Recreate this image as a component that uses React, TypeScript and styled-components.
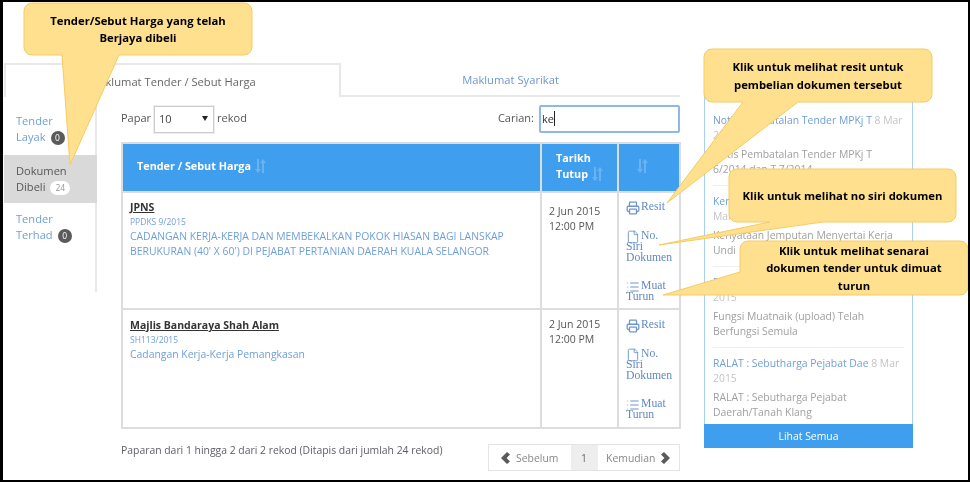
import React from "react";
import styled, { createGlobalStyle } from "styled-components";
import { Printer, File, List } from "lucide-react";

const Global = createGlobalStyle`
  html, body { margin: 0; padding: 0; background: #fff; }
  body { font-family: "Open Sans", "Liberation Sans", sans-serif; font-size: 10.5px; color: #555; }
`;

const Frame = styled.div`
  position: relative;
  box-sizing: border-box;
  width: 970px;
  height: 482px;
  padding: 63px 0 0 4px;
  display: flex;
  align-items: flex-start;
  overflow: hidden;
  background: #fff;
  filter: blur(0.35px);
  &::after {
    content: "";
    position: absolute;
    inset: 0;
    border-style: solid;
    border-color: #000;
    border-width: 2px 2px 2px 3px;
    pointer-events: none;
  }
`;

const Main = styled.div`
  width: 676px;
  flex: none;
`;

const Tabs = styled.div`
  display: flex;
  height: 34px;
`;

const Tab = styled.div<{ $active?: boolean }>`
  box-sizing: border-box;
  width: ${(p) => (p.$active ? 337 : 339)}px;
  display: flex;
  align-items: center;
  justify-content: center;
  font-size: 11.2px;
  color: ${(p) => (p.$active ? "#666" : "#6f97cf")};
  border-style: solid;
  border-color: #e8e8e8;
  border-width: ${(p) => (p.$active ? "2px 2px 0 2px" : "0 0 2px 0")};
`;

const Body = styled.div`
  display: flex;
  align-items: flex-start;
`;

const Nav = styled.nav`
  box-sizing: border-box;
  width: 93px;
  height: 195px;
  flex: none;
  border-right: 2px solid #e8e8e8;
`;

const NavItem = styled.div<{ $active?: boolean; $pad: string }>`
  padding: ${(p) => p.$pad};
  line-height: 16px;
  font-size: 11.1px;
  color: ${(p) => (p.$active ? "#555" : "#6f9fd8")};
  background: ${(p) => (p.$active ? "#d9d9d9" : "transparent")};
  margin-right: -2px;
`;

const Badge = styled.span<{ $light?: boolean }>`
  display: inline-block;
  min-width: 14px;
  box-sizing: border-box;
  height: 14px;
  line-height: 14px;
  padding: 0 ${(p) => (p.$light ? 5 : 3)}px;
  margin-left: 5px;
  border-radius: 7px;
  font-size: 8.5px;
  text-align: center;
  vertical-align: 0;
  color: ${(p) => (p.$light ? "#999" : "#fff")};
  background: ${(p) => (p.$light ? "#fff" : "#5a5a5a")};
`;

const Content = styled.div`
  margin-left: 24px;
  width: 559px;
  flex: none;
`;

const Controls = styled.div`
  display: flex;
  align-items: center;
  height: 28px;
  margin-top: 8px;
  font-size: 11px;
`;

const Label = styled.span`
  margin-top: -3px;
`;

const SelectBox = styled.div`
  box-sizing: border-box;
  width: 60px;
  height: 27px;
  margin: 0 3px 0 3px;
  padding: 0 0 2px 4px;
  display: flex;
  align-items: center;
  justify-content: space-between;
  border: 1px solid #ccc;
  box-shadow: 0 0 0 1px #eee;
  color: #444;
  font-size: 11px;
  &::after {
    content: "";
    margin-right: 5px;
    border-left: 3.5px solid transparent;
    border-right: 3.5px solid transparent;
    border-top: 5px solid #222;
  }
`;

const Spacer = styled.div`
  flex: 1;
`;

const SearchBox = styled.div`
  box-sizing: border-box;
  width: 141px;
  height: 28px;
  margin-left: 5px;
  padding: 0 0 1px 1px;
  display: flex;
  align-items: center;
  border: 2px solid #8fb8ea;
  border-radius: 2px;
  color: #333;
  font-size: 11px;
  &::after {
    content: "";
    width: 1px;
    height: 15px;
    background: #222;
  }
`;

const Table = styled.table`
  width: 558px;
  margin-top: 9px;
  table-layout: fixed;
  border-collapse: collapse;
  border-bottom: 2px solid #6b97b8;
`;

const HeadRow = styled.tr`
  height: 49px;
  background: #409eee;
`;

const Th = styled.th`
  padding: 0 6px 3px 14px;
  border: 2px solid #ddd;
  color: #fff;
  font-size: 10.8px;
  font-weight: 700;
  line-height: 16px;
  text-align: left;
`;

const Row = styled.tr<{ $h: number }>`
  height: ${(p) => p.$h}px;
`;

const Td = styled.td<{ $pad: string }>`
  padding: ${(p) => p.$pad};
  border: 2px solid #ddd;
  vertical-align: top;
  overflow: hidden;
`;

const Agency = styled.div`
  font-size: 10.5px;
  font-weight: 700;
  line-height: 16px;
  color: #333;
  text-decoration: underline;
`;

const Ref = styled.div`
  font-size: 8.5px;
  line-height: 14px;
  color: #6f9fd8;
`;

const Desc = styled.div`
  font-size: 10.4px;
  line-height: 15px;
  color: #6f9fd8;
  white-space: nowrap;
`;

const DateText = styled.div`
  font-size: 10.5px;
  line-height: 14.5px;
  color: #555;
`;

const Actions = styled.div`
  display: flex;
  flex-direction: column;
  gap: 17.5px;
`;

const ActionLink = styled.a`
  font-family: "Liberation Serif", serif;
  font-size: 11.7px;
  line-height: 11px;
  color: #6189c4;
  svg {
    vertical-align: -2px;
    margin: -3px 1px -3px 0;
    color: #6f96cc;
  }
`;

const Footer = styled.div`
  display: flex;
  justify-content: space-between;
  align-items: flex-start;
  margin-top: 15px;
`;

const Info = styled.div`
  font-size: 10.4px;
  line-height: 16px;
  margin-top: -2px;
  color: #5d5d66;
`;

const Pager = styled.div`
  box-sizing: border-box;
  width: 192px;
  height: 27px;
  display: flex;
  border: 1px solid #e4e4e4;
  font-size: 10.4px;
  color: #888;
`;

const PageBtn = styled.div`
  flex: 1;
  display: flex;
  align-items: center;
  justify-content: center;
  gap: 6px;
  svg { color: #5a5a5a; flex: none; }
`;

const PageNum = styled.div`
  width: 27px;
  display: flex;
  align-items: center;
  justify-content: center;
  background: #eee;
  color: #666;
`;

const Panel = styled.aside`
  box-sizing: border-box;
  width: 209px;
  height: 358px;
  margin: 27px 0 0 24px;
  flex: none;
  display: flex;
  flex-direction: column;
  border: 1px solid #a8d0f5;
  border-bottom: 0;
`;

const PanelList = styled.div`
  flex: 1;
  padding: 22px 8px 0;
  overflow: hidden;
`;

const NewsItem = styled.div`
  padding-bottom: 8px;
  margin-bottom: 8px;
  border-bottom: 1px solid #eee;
  &:last-child { border-bottom: 0; margin-bottom: 0; padding-bottom: 0; }
`;

const NewsTitle = styled.div`
  font-size: 10.4px;
  line-height: 15px;
  color: #6f9fd8;
  span { color: #c4c4c4; }
`;

const NewsBody = styled.div`
  margin-top: 4px;
  font-size: 10.4px;
  line-height: 15px;
  color: #a0a0a0;
`;

const SeeAll = styled.div`
  height: 24px;
  margin: 0 -1px;
  display: flex;
  align-items: center;
  justify-content: center;
  background: #409eee;
  color: #fff;
  font-size: 10.4px;
`;

const Bubble = styled.div<{ $l: number; $t: number; $w: number; $h: number }>`
  position: absolute;
  left: ${(p) => p.$l}px;
  top: ${(p) => p.$t}px;
  width: ${(p) => p.$w}px;
  height: ${(p) => p.$h}px;
  display: flex;
  align-items: center;
  justify-content: center;
  text-align: center;
  font-size: 11.3px;
  font-weight: 700;
  line-height: 17.5px;
  color: #000;
`;

const BubbleShape = styled.svg`
  position: absolute;
  left: 0;
  top: 0;
  overflow: visible;
  fill: #ffe08f;
  stroke: #f6cb62;
  stroke-width: 1;
`;

const BubbleText = styled.div`
  position: relative;
  padding: 0 6px;
`;

const SortSvg = styled.svg`
  display: inline-block;
  vertical-align: -3px;
  margin-left: 4px;
  fill: #fff;
  opacity: 0.22;
`;

const Sort = () => (
  <SortSvg width="11" height="14" viewBox="0 0 11 14">
    <path d="M2 0h2v10h2l-3 4-3-4h2z" />
    <path d="M7 14h2V4h2L8 0 5 4h2z" />
  </SortSvg>
);

const Chevron = ({ right }: { right?: boolean }) => (
  <svg width="9" height="12" viewBox="0 0 9 12" fill="currentColor">
    <path d={right ? "M3 0l6 6-6 6-3-2.6L3.4 6 0 2.6z" : "M6 0L0 6l6 6 3-2.6L5.6 6 9 2.6z"} />
  </svg>
);

const RowActions = () => (
  <Actions>
    <ActionLink>
      <Printer size={14} strokeWidth={2.2} />Resit
    </ActionLink>
    <ActionLink>
      <File size={14} strokeWidth={1.6} />No.
      <br />
      Siri
      <br />
      Dokumen
    </ActionLink>
    <ActionLink>
      <List size={14} strokeWidth={1.8} />Muat
      <br />
      Turun
    </ActionLink>
  </Actions>
);

const bubbles = [
  {
    l: 24, t: 3, w: 228, h: 52,
    d: "M8 0H220a8 8 0 0 1 8 8V44a8 8 0 0 1-8 8H95L46 162 38 52H8a8 8 0 0 1-8-8V8a8 8 0 0 1 8-8z",
    text: ["Tender/Sebut Harga yang telah", "Berjaya dibeli"],
  },
  {
    l: 704, t: 49, w: 228, h: 53,
    d: "M8 0H220a8 8 0 0 1 8 8V45a8 8 0 0 1-8 8H94L-37 154 39 53H8a8 8 0 0 1-8-8V8a8 8 0 0 1 8-8z",
    text: ["Klik untuk melihat resit untuk", "pembelian dokumen tersebut"],
  },
  {
    l: 729, t: 169, w: 227, h: 53,
    d: "M8 0H219a8 8 0 0 1 8 8V45a8 8 0 0 1-8 8H94L-70 76 41 53H8a8 8 0 0 1-8-8V8a8 8 0 0 1 8-8z",
    text: ["Klik untuk melihat no siri dokumen"],
  },
  {
    l: 740, t: 241, w: 228, h: 54,
    d: "M8 0H220a8 8 0 0 1 8 8V46a8 8 0 0 1-8 8H8L-77 54 0 31V8a8 8 0 0 1 8-8z",
    text: ["Klik untuk melihat senarai", "dokumen tender untuk dimuat", "turun"],
  },
];

const news = [
  { title: "Notis Pembatalan Tender MPKj T", date: "8 Mar 2015", body: "Notis Pembatalan Tender MPKj T 6/2014 dan T 7/2014" },
  { title: "Kenyataan Jemputan Menyertai Ke", date: "8 Mar 2015", body: "Kenyataan Jemputan Menyertai Kerja Undi" },
  { title: "Fungsi Muatnaik (upload) Telah", date: "8 Mar 2015", body: "Fungsi Muatnaik (upload) Telah Berfungsi Semula" },
  { title: "RALAT : Sebutharga Pejabat Dae", date: "8 Mar 2015", body: "RALAT : Sebutharga Pejabat Daerah/Tanah Klang" },
];

export default function App() {
  return (
    <Frame>
      <Global />
      <Main>
        <Tabs>
          <Tab $active>Maklumat Tender / Sebut Harga</Tab>
          <Tab>Maklumat Syarikat</Tab>
        </Tabs>
        <Body>
          <Nav>
            <NavItem $pad="16px 12px 10px">
              Tender
              <br />
              Layak<Badge>0</Badge>
            </NavItem>
            <NavItem $active $pad="8px 12px">
              Dokumen
              <br />
              Dibeli<Badge $light>24</Badge>
            </NavItem>
            <NavItem $pad="8px 12px">
              Tender
              <br />
              Terhad<Badge>0</Badge>
            </NavItem>
          </Nav>
          <Content>
            <Controls>
              <Label>Papar</Label>
              <SelectBox>10</SelectBox>
              <Label>rekod</Label>
              <Spacer />
              <Label>Carian:</Label>
              <SearchBox>ke</SearchBox>
            </Controls>
            <Table>
              <colgroup>
                <col width={419} />
                <col width={77} />
                <col width={62} />
              </colgroup>
              <thead>
                <HeadRow>
                  <Th>
                    Tender / Sebut Harga
                    <Sort />
                  </Th>
                  <Th>
                    Tarikh
                    <br />
                    Tutup
                    <Sort />
                  </Th>
                  <Th>
                    <Sort />
                  </Th>
                </HeadRow>
              </thead>
              <tbody>
                <Row $h={117}>
                  <Td $pad="6px 7px">
                    <Agency>JPNS</Agency>
                    <Ref>PPDKS 9/2015</Ref>
                    <Desc>
                      CADANGAN KERJA-KERJA DAN MEMBEKALKAN POKOK HIASAN BAGI LANSKAP
                      <br />
                      BERUKURAN (40' X 60') DI PEJABAT PERTANIAN DAERAH KUALA SELANGOR
                    </Desc>
                  </Td>
                  <Td $pad="11px 7px">
                    <DateText>
                      2 Jun 2015
                      <br />
                      12:00 PM
                    </DateText>
                  </Td>
                  <Td $pad="8px 0 0 7px">
                    <RowActions />
                  </Td>
                </Row>
                <Row $h={119}>
                  <Td $pad="7px 7px">
                    <Agency>Majlis Bandaraya Shah Alam</Agency>
                    <Ref>SH113/2015</Ref>
                    <Desc>Cadangan Kerja-Kerja Pemangkasan</Desc>
                  </Td>
                  <Td $pad="7px 7px">
                    <DateText>
                      2 Jun 2015
                      <br />
                      12:00 PM
                    </DateText>
                  </Td>
                  <Td $pad="9px 0 0 7px">
                    <RowActions />
                  </Td>
                </Row>
              </tbody>
            </Table>
            <Footer>
              <Info>Paparan dari 1 hingga 2 dari 2 rekod (Ditapis dari jumlah 24 rekod)</Info>
              <Pager>
                <PageBtn>
                  <Chevron />
                  Sebelum
                </PageBtn>
                <PageNum>1</PageNum>
                <PageBtn>
                  Kemudian
                  <Chevron right />
                </PageBtn>
              </Pager>
            </Footer>
          </Content>
        </Body>
      </Main>
      <Panel>
        <PanelList>
          {news.map((n) => (
            <NewsItem key={n.title}>
              <NewsTitle>
                {n.title} <span>{n.date}</span>
              </NewsTitle>
              <NewsBody>{n.body}</NewsBody>
            </NewsItem>
          ))}
        </PanelList>
        <SeeAll>Lihat Semua</SeeAll>
      </Panel>
      {bubbles.map((b) => (
        <Bubble key={b.l} $l={b.l} $t={b.t} $w={b.w} $h={b.h}>
          <BubbleShape width={b.w} height={b.h} viewBox={`0 0 ${b.w} ${b.h}`}>
            <path d={b.d} />
          </BubbleShape>
          <BubbleText>
            {b.text.map((t) => (
              <div key={t}>{t}</div>
            ))}
          </BubbleText>
        </Bubble>
      ))}
    </Frame>
  );
}
